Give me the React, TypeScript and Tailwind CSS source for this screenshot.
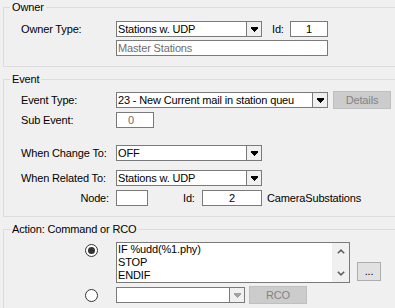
import React from "react";

function Group({ title, bodyClass, children }: { title: string; bodyClass: string; children: React.ReactNode }) {
  return (
    <div className="flex flex-col">
      <div className="flex h-[15px]">
        <div className="w-[7px] h-[8px] mt-[7px] border-l border-t border-[#dcdcdc]" />
        <span className="px-[2px] leading-[15px] whitespace-nowrap">{title}</span>
        <div className="flex-1 h-[8px] mt-[7px] border-t border-[#dcdcdc]" />
      </div>
      <div className={bodyClass}>{children}</div>
    </div>
  );
}

function Arrow({ disabled }: { disabled?: boolean }) {
  const c = disabled ? "#a2a2a2" : "#000000";
  return (
    <svg width="7" height="5" viewBox="0 0 7 5" shapeRendering="crispEdges">
      <rect x="0" y="0" width="7" height="1" fill={c} />
      <rect x="0" y="1" width="7" height="1" fill={c} />
      <rect x="1" y="2" width="5" height="1" fill={c} />
      <rect x="2" y="3" width="3" height="1" fill={c} />
      <rect x="3" y="4" width="1" height="1" fill={c} />
    </svg>
  );
}

function Combo({ w, text, disabled }: { w: string; text?: string; disabled?: boolean }) {
  return (
    <div className={"flex h-[16px] border border-[#7a7a7a] bg-white " + w}>
      <div className="flex-1 pl-[1px] leading-[14px] whitespace-nowrap overflow-hidden">{text}</div>
      <div className="w-[15px] border-l border-[#7a7a7a] bg-[#f0f0f0] flex items-center justify-center">
        <Arrow disabled={disabled} />
      </div>
    </div>
  );
}

function Radio({ checked }: { checked?: boolean }) {
  return (
    <svg width="13" height="13" viewBox="0 0 13 13">
      <circle cx="6.5" cy="6.5" r="6" fill="#ffffff" stroke="#333333" strokeWidth="1" />
      {checked && <circle cx="6.5" cy="6.5" r="3.5" fill="#333333" />}
    </svg>
  );
}

export default function App() {
  return (
    <div className="w-[395px] h-[308px] overflow-hidden bg-[#f0f0f0] pl-[3px] text-[11px] tracking-[-0.15px] text-black font-['Liberation_Sans',Arial,sans-serif]">
      <Group title="Owner" bodyClass="border-l border-b border-[#dcdcdc] pt-[6px] pb-[10px] pl-[17px]">
        <div className="flex items-center h-[16px]">
          <span className="w-[95px]">Owner Type:</span>
          <Combo w="w-[146px]" text="Stations w. UDP" />
          <span className="ml-[10px] w-[18px]">Id:</span>
          <div className="w-[38px] h-[16px] border border-[#7a7a7a] bg-white text-center leading-[14px]">1</div>
        </div>
        <div className="flex mt-[3px] ml-[95px]">
          <div className="w-[212px] h-[16px] border border-[#7a7a7a] bg-white pl-[1px] leading-[14px] text-[#6d6d6d]">Master Stations</div>
        </div>
      </Group>

      <div className="mt-[5px]">
        <Group title="Event" bodyClass="border-l border-b border-[#dcdcdc] pt-[4px] pb-[10px] pl-[17px]">
          <div className="flex items-center h-[18px]">
            <span className="w-[95px]">Event Type:</span>
            <Combo w="w-[212px]" text="23 - New Current mail in station queu" />
            <div className="ml-[5px] w-[58px] h-[18px] border border-[#bfbfbf] bg-[#cccccc] text-[#838383] flex items-center justify-center">Details</div>
          </div>
          <div className="flex items-center h-[16px] mt-[3px]">
            <span className="w-[95px]">Sub Event:</span>
            <div className="w-[38px] h-[16px] border border-[#7a7a7a] bg-white pl-[11px] leading-[14px] text-[#6d6d6d]">0</div>
          </div>
          <div className="flex items-center h-[16px] mt-[17px]">
            <span className="w-[95px]">When Change To:</span>
            <Combo w="w-[146px]" text="OFF" />
          </div>
          <div className="flex items-center h-[16px] mt-[9px]">
            <span className="w-[95px]">When Related To:</span>
            <Combo w="w-[146px]" text="Stations w. UDP" />
          </div>
          <div className="flex items-center h-[16px] mt-[4px]">
            <span className="w-[88px] mr-[7px] text-right">Node:</span>
            <div className="w-[32px] h-[16px] border border-[#7a7a7a] bg-white" />
            <span className="ml-[35px] w-[19px]">Id:</span>
            <div className="w-[60px] h-[16px] border border-[#7a7a7a] bg-white text-center leading-[14px]">2</div>
            <span className="ml-[5px] whitespace-nowrap">CameraSubstations</span>
          </div>
        </Group>
      </div>

      <div className="mt-[5px]">
        <Group title="Action: Command or RCO" bodyClass="border-l border-b border-[#dcdcdc] pt-[5px] pb-[10px] pl-[17px]">
          <div className="flex items-start">
            <div className="w-[95px] pl-[64px] pt-[2px] flex">
              <Radio checked />
            </div>
            <div className="w-[234px] h-[41px] border border-[#7a7a7a] bg-white flex">
              <div className="flex-1 pl-[1px] leading-[13px] whitespace-pre">{"IF %udd(%1.phy)\nSTOP\nENDIF"}</div>
              <div className="w-[17px] bg-[#f0f0f0] flex flex-col items-center justify-between py-[6px]">
                <svg width="8" height="5" viewBox="0 0 8 5">
                  <path d="M0.8 4.3 L4 1.2 L7.2 4.3" fill="none" stroke="#606060" strokeWidth="1.6" />
                </svg>
                <svg width="8" height="5" viewBox="0 0 8 5">
                  <path d="M0.8 0.7 L4 3.8 L7.2 0.7" fill="none" stroke="#606060" strokeWidth="1.6" />
                </svg>
              </div>
            </div>
            <div className="ml-[7px] mt-[20px] w-[24px] h-[19px] border border-[#adadad] bg-[#e1e1e1] flex items-center justify-center leading-none">...</div>
          </div>
          <div className="flex items-center h-[18px] mt-[3px]">
            <div className="w-[95px] pl-[64px] flex">
              <Radio />
            </div>
            <Combo w="w-[129px]" disabled />
            <div className="ml-[4px] w-[58px] h-[18px] border border-[#bfbfbf] bg-[#cccccc] text-[#838383] flex items-center justify-center">RCO</div>
          </div>
        </Group>
      </div>
    </div>
  );
}
